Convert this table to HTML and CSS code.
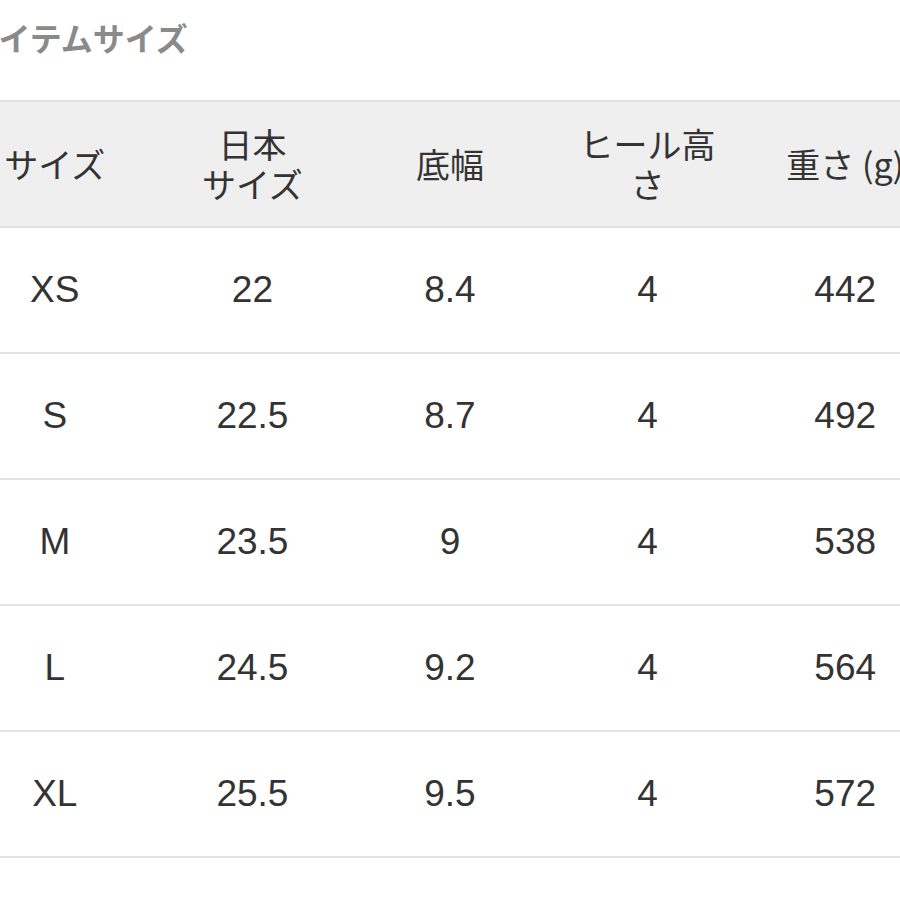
FILE: index.html
```html
<!DOCTYPE html>
<html lang="ja">
<head>
<meta charset="utf-8">
<title>アイテムサイズ</title>
<link rel="stylesheet" href="styles.css">
</head>
<body>
<div class="page">
  <h2 class="title">アイテムサイズ</h2>
  <table class="size-table">
    <thead>
      <tr>
        <th>サイズ</th>
        <th>日本<br>サイズ</th>
        <th>底幅</th>
        <th>ヒール高<br>さ</th>
        <th>重さ (g)</th>
      </tr>
    </thead>
    <tbody>
      <tr><td>XS</td><td>22</td><td>8.4</td><td>4</td><td>442</td></tr>
      <tr><td>S</td><td>22.5</td><td>8.7</td><td>4</td><td>492</td></tr>
      <tr><td>M</td><td>23.5</td><td>9</td><td>4</td><td>538</td></tr>
      <tr><td>L</td><td>24.5</td><td>9.2</td><td>4</td><td>564</td></tr>
      <tr><td>XL</td><td>25.5</td><td>9.5</td><td>4</td><td>572</td></tr>
    </tbody>
  </table>
</div>
</body>
</html>
```

FILE: styles.css
```css
html, body {
  margin: 0;
  padding: 0;
  background: #ffffff;
  overflow: hidden;
}

.page {
  width: 900px;
  height: 900px;
  overflow: hidden;
  font-family: "Liberation Sans", "Noto Sans CJK JP", sans-serif;
  color: #333333;
}

.title {
  margin: 0 0 0 -32px;
  height: 100px;
  padding-top: 17px;
  box-sizing: border-box;
  font-family: "Noto Sans CJK JP", sans-serif;
  font-size: 32px;
  font-weight: 700;
  line-height: 40px;
  color: #8a8a8a;
}

.size-table {
  margin-left: -44px;
  width: 988px;
  table-layout: fixed;
  border-collapse: collapse;
}

.size-table th,
.size-table td {
  text-align: center;
  padding: 0;
  vertical-align: middle;
}

.size-table thead tr {
  background: #efefef;
  border-top: 2px solid #e0e0e0;
  border-bottom: 2px solid #e0e0e0;
  height: 126px;
}

.size-table th {
  font-family: "Noto Sans CJK JP", sans-serif;
  font-weight: 400;
  font-size: 34px;
  line-height: 40px;
  color: #333333;
}

.size-table tbody tr {
  height: 126px;
  border-bottom: 2px solid #e3e3e3;
}

.size-table td {
  font-size: 37px;
  color: #333333;
}
```
